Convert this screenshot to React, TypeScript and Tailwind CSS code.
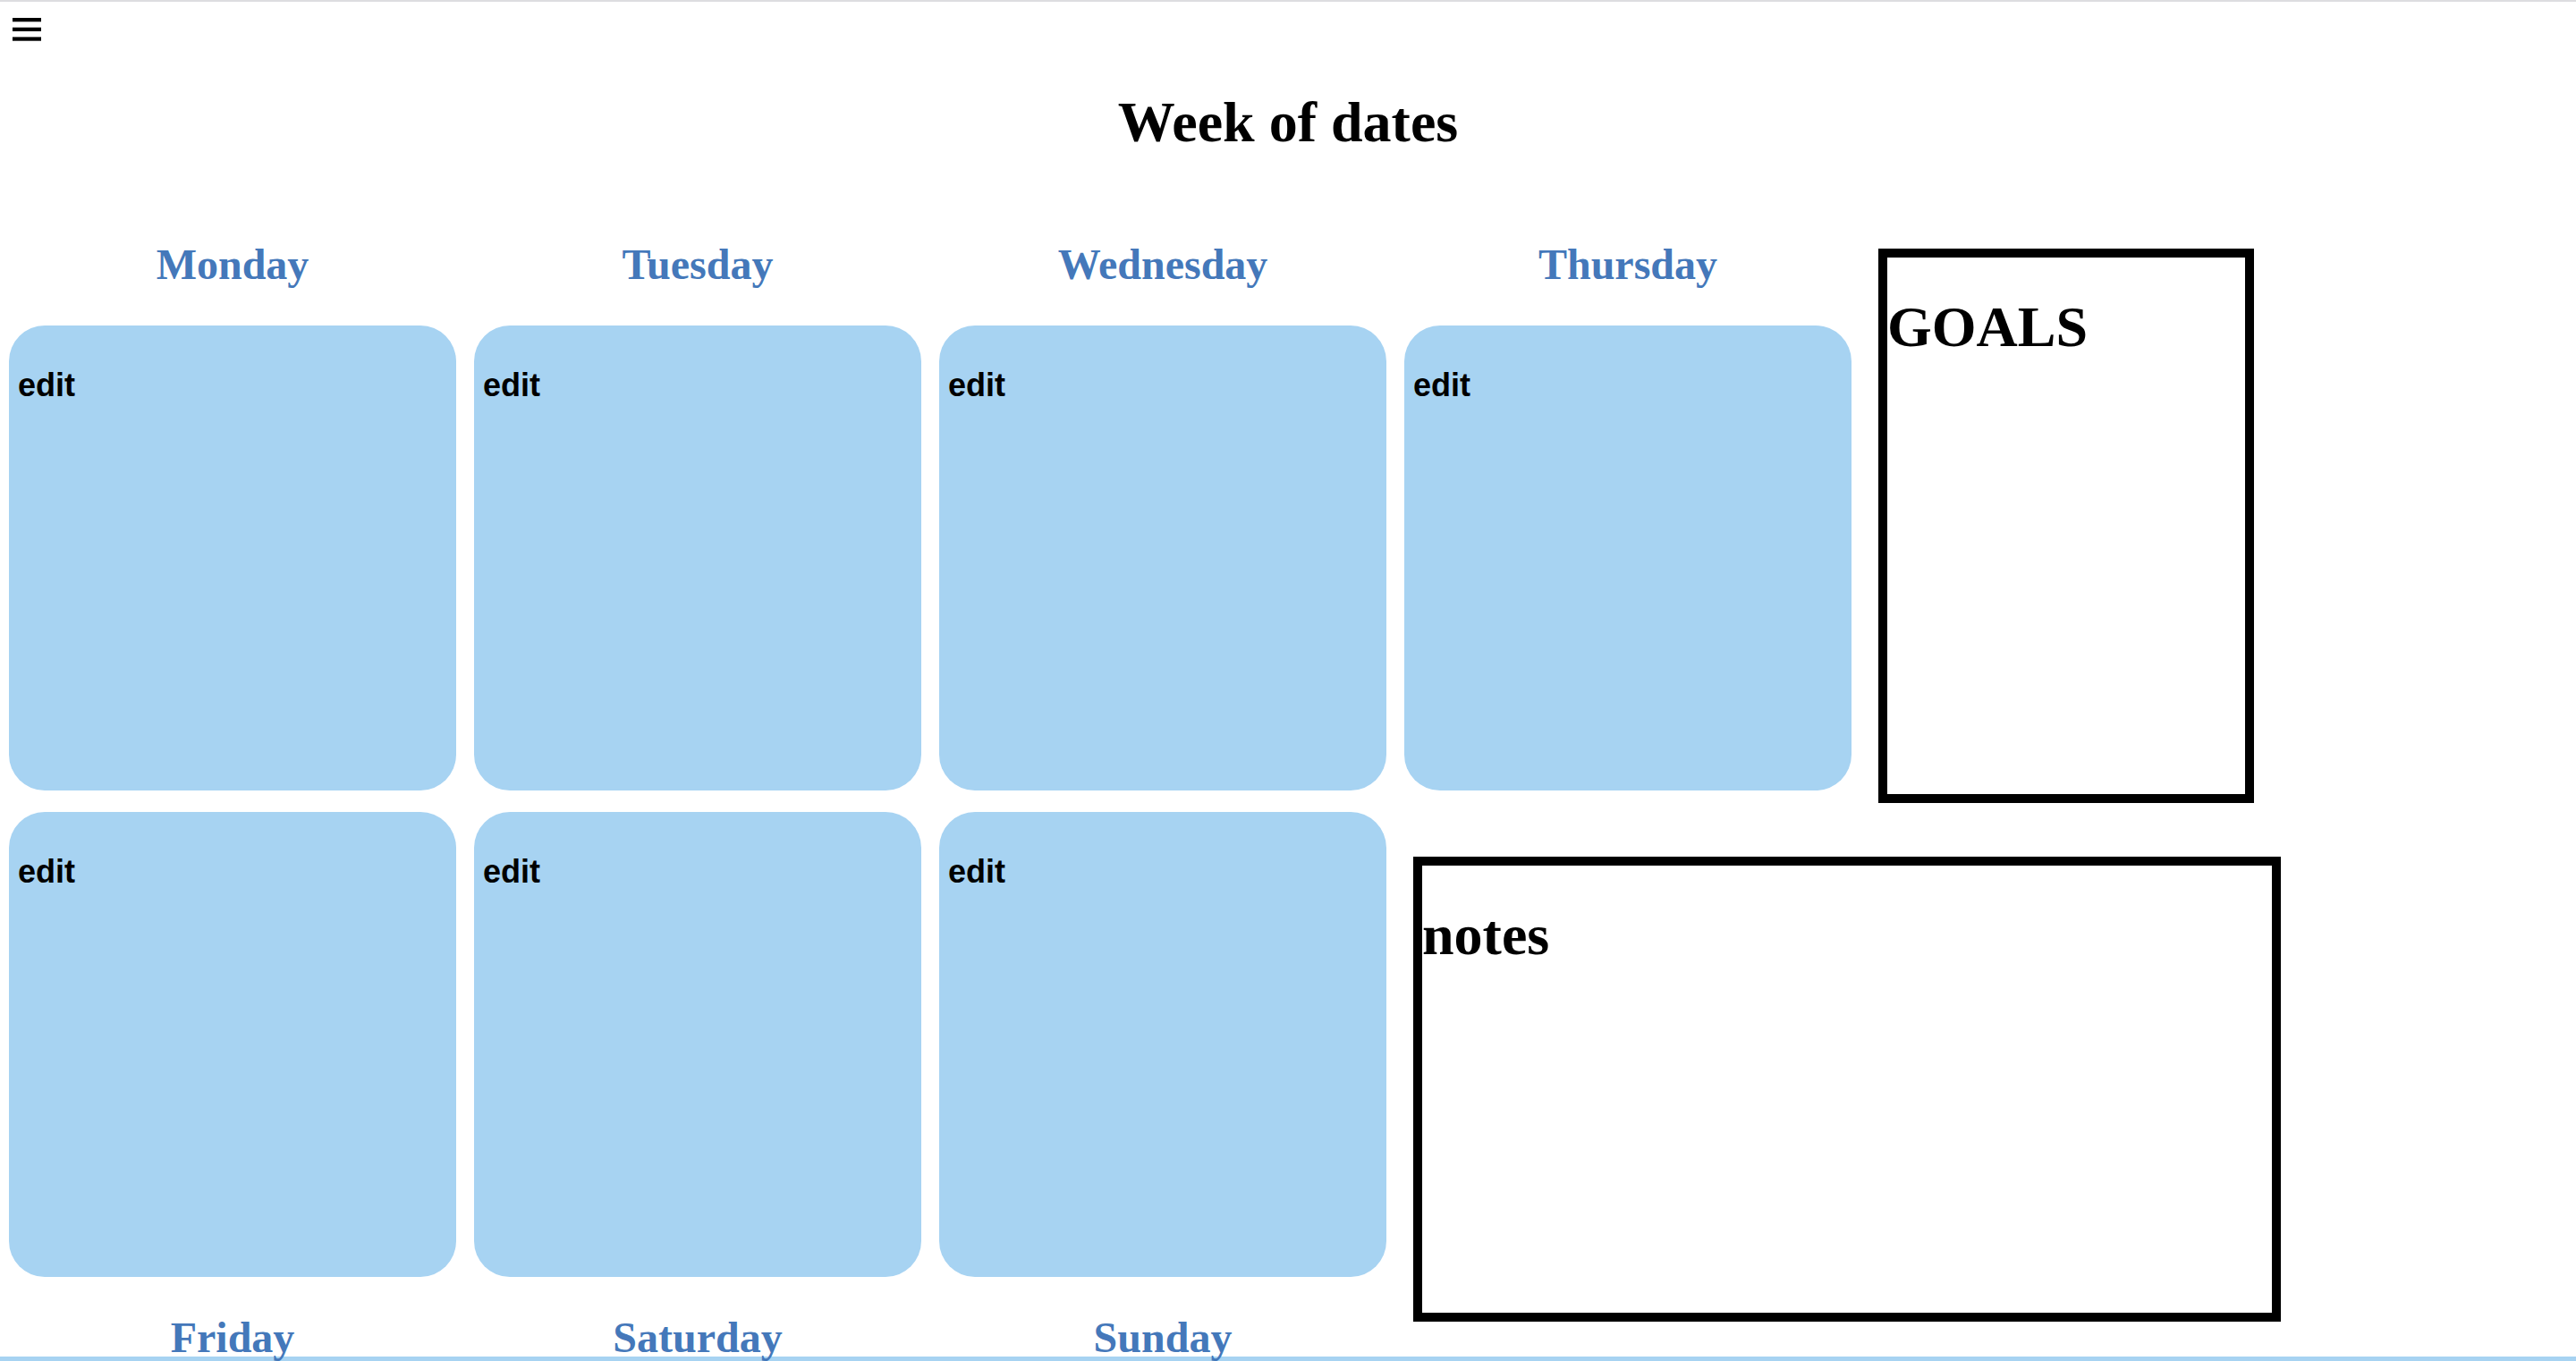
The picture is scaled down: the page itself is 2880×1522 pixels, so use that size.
import React from "react";

const serif = { fontFamily: '"Liberation Serif", "Times New Roman", serif' };

function Card() {
  return (
    <div className="h-[520px] w-[500px] rounded-[40px] bg-[#a7d3f2] pl-[10px] pt-[46px]">
      <div
        className="text-[36px] font-bold leading-[41px] text-black"
        style={{ fontFamily: '"Liberation Sans", Arial, sans-serif' }}
      >
        edit
      </div>
    </div>
  );
}

function DayHeading({ name, className }: { name: string; className: string }) {
  return (
    <h2
      className={`text-center text-[48px] font-bold text-[#4478ba] ${className}`}
      style={serif}
    >
      {name}
    </h2>
  );
}

export default function App() {
  const top = ["Monday", "Tuesday", "Wednesday", "Thursday"];
  const bottom = ["Friday", "Saturday", "Sunday"];
  return (
    <div className="w-[2880px] bg-white text-black" style={serif}>
      <div className="h-[2px] bg-[#dddde0]" />
      <div className="pl-[14px] pt-[18px]">
        <svg width="32" height="26" viewBox="0 0 32 26" className="block">
          <rect x="0" y="0" width="32" height="4.3" fill="#000" />
          <rect x="0" y="10.7" width="32" height="4.3" fill="#000" />
          <rect x="0" y="21.4" width="32" height="4.3" fill="#000" />
        </svg>
      </div>
      <h1 className="mt-[54px] text-center text-[64px] font-bold leading-[74px]">
        Week of dates
      </h1>

      <div className="mt-[94px] flex items-start pl-[10px]">
        <div className="grid grid-cols-[repeat(4,500px)] gap-x-[20px]">
          {top.map((d) => (
            <DayHeading key={d} name={d} className="leading-[55px]" />
          ))}
          {top.map((d) => (
            <div key={d + "c"} className="mt-[41px]">
              <Card />
            </div>
          ))}
        </div>
        <div className="ml-[30px] mt-[10px] h-[620px] w-[420px] border-[10px] border-black">
          <h1 className="mt-[41px] text-[64px] font-bold leading-[74px]">GOALS</h1>
        </div>
      </div>

      <div className="mt-[10px] flex items-start pl-[10px]">
        <div className="grid grid-cols-[repeat(3,500px)] gap-x-[20px]">
          {bottom.map((d) => (
            <Card key={d + "c"} />
          ))}
          {bottom.map((d) => (
            <DayHeading key={d} name={d} className="mt-[46px] leading-[43px]" />
          ))}
        </div>
        <div className="ml-[30px] mt-[50px] h-[520px] w-[970px] border-[10px] border-black">
          <h1 className="mt-[41px] text-[64px] font-bold leading-[74px]">notes</h1>
        </div>
      </div>

      <div className="h-[5px] bg-[#a7d3f2]" />
    </div>
  );
}
